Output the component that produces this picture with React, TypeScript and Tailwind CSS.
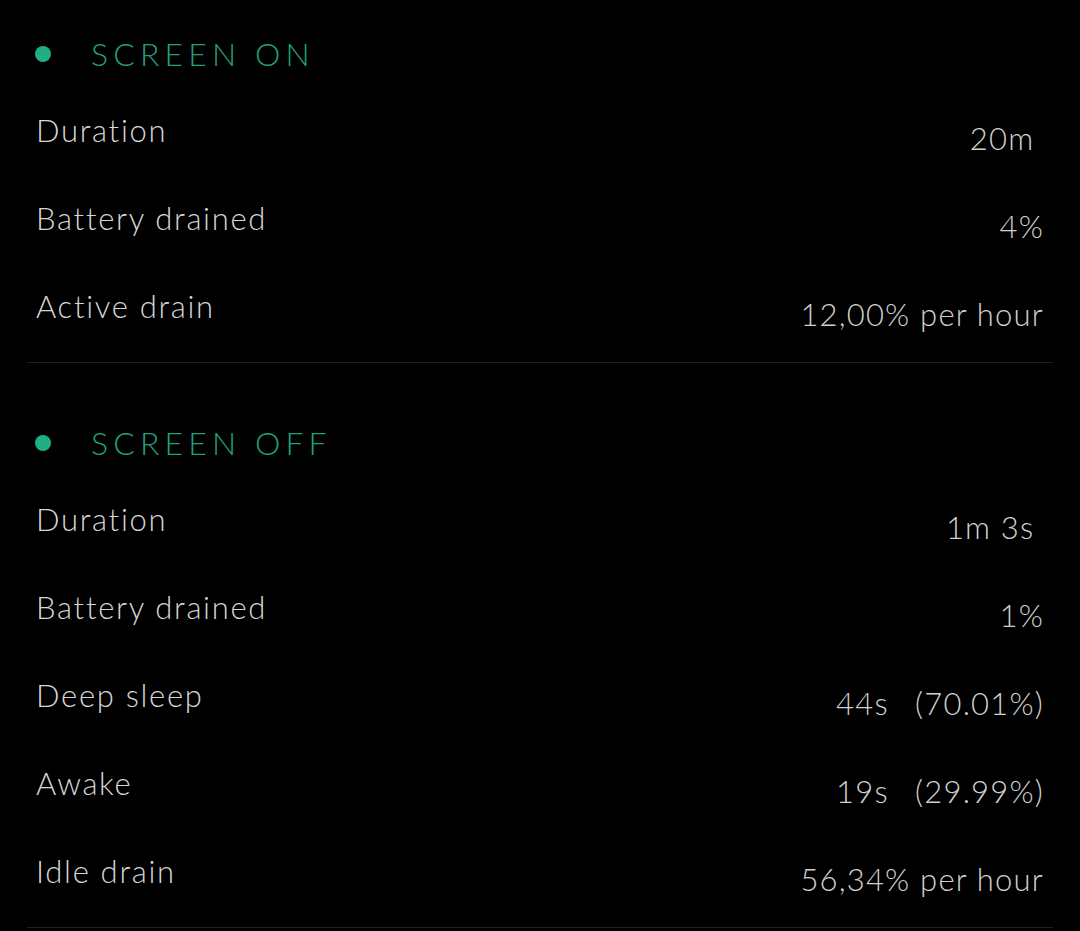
type Row = { label: string; value: string };

const screenOn: Row[] = [
  { label: 'Duration', value: '20m ' },
  { label: 'Battery drained', value: '4%' },
  { label: 'Active drain', value: '12,00% per hour' },
];

const screenOff: Row[] = [
  { label: 'Duration', value: '1m 3s ' },
  { label: 'Battery drained', value: '1%' },
  { label: 'Deep sleep', value: '44s\u2002 (70.01%)' },
  { label: 'Awake', value: '19s\u2002 (29.99%)' },
  { label: 'Idle drain', value: '56,34% per hour' },
];

function Section({ title, rows }: { title: string; rows: Row[] }) {
  return (
    <div>
      {/* Header */}
      <div className="h-[76px] flex items-center pl-[35px]">
        <span className="w-4 h-4 rounded-full bg-[#1fae86] shrink-0" />
        <span className="ml-[40px] text-[32px] tracking-[0.16em] text-[#22a07e] font-light leading-none">
          {title}
        </span>
      </div>

      {/* Rows */}
      {rows.map((r) => (
        <div key={r.label} className="h-[88px] flex items-center justify-between px-[36px]">
          <span className="pb-3 text-[31px] tracking-[1.7px] text-[#d6d6d6] font-light leading-none">{r.label}</span>
          <span className="pt-1 text-[31px] tracking-[1.2px] text-[#d0d0d0] font-light leading-none whitespace-pre">{r.value}</span>
        </div>
      ))}
      <div className="mt-[6px] mx-[27px] h-px bg-[#1f1f1f]" />
    </div>
  );
}

export default function App() {
  return (
    <div className="w-[1080px] h-[931px] bg-black overflow-hidden pt-4 font-['Lato','Open_Sans',sans-serif]">
      <Section title="SCREEN ON" rows={screenOn} />
      <div className="h-[42px]" />
      <Section title="SCREEN OFF" rows={screenOff} />
    </div>
  );
}
